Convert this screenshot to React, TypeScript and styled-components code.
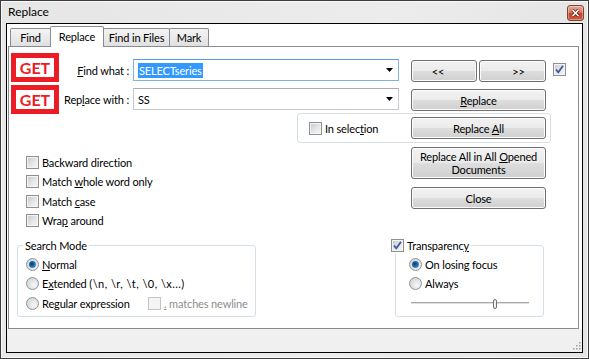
import React from 'react';
import styled, { createGlobalStyle } from 'styled-components';

const GlobalStyle = createGlobalStyle`
  html, body {
    margin: 0;
    padding: 0;
    background: #ffffff;
  }
  body {
    font-family: Lato, "Liberation Sans", sans-serif;
    font-size: 11px;
    letter-spacing: -0.15px;
    color: #000000;
  }
  * {
    box-sizing: border-box;
  }
`;

const Window = styled.div`
  width: 589px;
  height: 359px;
  border: 1px solid #3c3c3c;
  box-shadow: inset 0 0 0 1px #fafafa;
  background: linear-gradient(100deg, #e6e6e6 0%, #ececec 60%, #e4e4e4 100%);
  padding: 0 5px 5px;
  display: flex;
  flex-direction: column;
`;

const TitleBar = styled.div`
  height: 22px;
  margin: 0 -5px;
  padding: 0 4px 0 7px;
  display: flex;
  align-items: flex-start;
  justify-content: space-between;
`;

const TitleText = styled.span`
  line-height: 22px;
  font-size: 12px;
  letter-spacing: 0;
`;

const CloseButton = styled.div`
  width: 17px;
  height: 16px;
  margin-top: 4px;
  border: 1px solid #7a4538;
  border-radius: 3px;
  background: linear-gradient(#e8a796 0%, #d7785f 45%, #c4432a 55%, #d05a3c 100%);
  box-shadow: inset 0 0 0 1px rgba(255, 255, 255, 0.35);
  display: flex;
  align-items: center;
  justify-content: center;
`;

const Client = styled.div`
  height: 330px;
  border: 1px solid #000000;
  background: #ffffff;
  display: flex;
  flex-direction: column;
`;

const TabStrip = styled.div`
  height: 22px;
  padding-left: 3px;
  display: flex;
  align-items: flex-end;
`;

const Tab = styled.div<{ $active?: boolean; $w: number }>`
  width: ${({ $w }) => $w}px;
  height: ${({ $active }) => ($active ? 21 : 18)}px;
  margin-left: -1px;
  margin-bottom: ${({ $active }) => ($active ? -1 : 0)}px;
  padding-bottom: ${({ $active }) => ($active ? 2 : 0)}px;
  border: 1px solid #898c95;
  border-bottom: none;
  border-radius: 2px 2px 0 0;
  background: ${({ $active }) =>
    $active ? '#ffffff' : 'linear-gradient(#f3f3f3 0%, #ebebeb 50%, #dfdfdf 100%)'};
  position: relative;
  z-index: ${({ $active }) => ($active ? 1 : 0)};
  display: flex;
  align-items: center;
  justify-content: center;

  &:first-child {
    margin-left: 0;
  }
`;

const Panel = styled.div`
  width: 571px;
  height: 283px;
  margin-left: 1px;
  border: 1px solid #898c95;
  background: #ffffff;
  padding: 9px 0 0 0;
  display: flex;
  flex-direction: column;
`;

const FieldRow = styled.div`
  height: 29px;
  padding-left: 2px;
  display: flex;
  align-items: flex-start;
`;

const Badge = styled.div<{ $shift: number }>`
  width: 48px;
  height: 29px;
  border: 5px solid #ed1c24;
  background: #ffffff;
  transform: translateY(${({ $shift }) => $shift}px);
  display: flex;
  align-items: center;
  justify-content: center;
  color: #ed1c24;
  font-weight: bold;
  font-size: 16px;
  letter-spacing: 0;
`;

const FieldLabel = styled.div`
  width: 74px;
  height: 29px;
  padding-right: 4px;
  display: flex;
  align-items: center;
  justify-content: flex-end;
  white-space: nowrap;
`;

const Combo = styled.div<{ $focused?: boolean }>`
  width: 266px;
  height: 22px;
  margin-top: 3px;
  border: 1px solid ${({ $focused }) => ($focused ? '#7eb4ea' : '#c5c8ce')};
  border-top-color: ${({ $focused }) => ($focused ? '#569de5' : '#abadb3')};
  background: #ffffff;
  padding-left: 4px;
  display: flex;
  align-items: center;
  justify-content: space-between;
`;

const Selected = styled.span`
  background: #3399ff;
  color: #ffffff;
  padding: 1px 1px;
`;

const ComboArrow = styled.span`
  width: 17px;
  display: flex;
  justify-content: center;
`;

const Button = styled.div<{ $w: number; $h?: number; $shift?: number }>`
  width: ${({ $w }) => $w}px;
  height: ${({ $h }) => $h ?? 22}px;
  border: 1px solid #707070;
  border-radius: 3px;
  background: linear-gradient(#f2f2f2 0%, #ebebeb 48%, #dddddd 52%, #cfcfcf 100%);
  box-shadow: inset 0 0 0 1px #fcfcfc;
  display: flex;
  align-items: center;
  justify-content: center;
  text-align: center;
  line-height: 13px;
  padding: ${({ $shift }) =>
    !$shift ? '0' : $shift < 0 ? `0 ${-$shift * 2}px 0 0` : `0 0 0 ${$shift * 2}px`};
`;

const RowButtons = styled.div`
  margin-top: 4px;
  margin-left: 12px;
  display: flex;
  gap: 2px;
`;

const RowCheck = styled.div`
  margin: 7px 0 0 7px;
`;

const CheckRow = styled.label`
  height: 13px;
  display: flex;
  align-items: center;
  gap: 3px;
  white-space: nowrap;
`;

const Box = styled.span<{ $disabled?: boolean }>`
  width: 13px;
  height: 13px;
  flex: none;
  border: 1px solid ${({ $disabled }) => ($disabled ? '#c4c4c4' : '#8e8f8f')};
  background: ${({ $disabled }) =>
    $disabled ? '#f4f4f4' : 'linear-gradient(135deg, #c4c6ca 0%, #e6e7e9 55%, #f6f6f6 100%)'};
  box-shadow: inset 0 0 0 1px #f4f4f4;
  display: flex;
  align-items: center;
  justify-content: center;
`;

const RadioDot = styled.span<{ $checked?: boolean }>`
  width: 13px;
  height: 13px;
  flex: none;
  border-radius: 50%;
  border: 1px solid #8f9396;
  background: radial-gradient(circle at 65% 65%, #f7f7f7 0%, #d8d9da 70%, #c8c9cb 100%);
  display: flex;
  align-items: center;
  justify-content: center;

  &::after {
    content: '';
    display: ${({ $checked }) => ($checked ? 'block' : 'none')};
    width: 7px;
    height: 7px;
    border-radius: 50%;
    background: radial-gradient(circle at 40% 40%, #0b3f73 0%, #1d6aa8 45%, #76c3ee 100%);
  }
`;

const U = styled.span`
  text-decoration: underline;
  text-underline-offset: 1px;
`;

const Muted = styled.span`
  color: #8d8d8d;
`;

const Escapes = styled.span`
  letter-spacing: 0.45px;
`;

const SelectionGroup = styled.div`
  width: 254px;
  height: 30px;
  margin: -1px 0 0 288px;
  border: 1px solid #d5dfe5;
  border-radius: 3px;
  padding: 0 4px 0 11px;
  display: flex;
  align-items: center;
  justify-content: space-between;
`;

const OptionsBlock = styled.div`
  display: flex;
`;

const CheckList = styled.div`
  width: 402px;
  padding: 13px 0 0 17px;
  display: flex;
  flex-direction: column;
  gap: 6.33px;
`;

const ButtonStack = styled.div`
  padding-top: 4px;
  display: flex;
  flex-direction: column;
  gap: 8px;
`;

const ModesBlock = styled.div`
  margin-top: 12px;
  display: flex;
`;

const GroupBox = styled.fieldset<{ $w: number; $ml: number; $pl: number }>`
  width: ${({ $w }) => $w}px;
  height: 78px;
  margin: 0 0 0 ${({ $ml }) => $ml}px;
  padding: 5px 0 0 ${({ $pl }) => $pl}px;
  border: 1px solid #d5dfe5;
  border-radius: 3px;
  display: flex;
  flex-direction: column;
  gap: 6.5px;
`;

const GroupTitle = styled.legend<{ $ml: number }>`
  margin-left: ${({ $ml }) => $ml}px;
  padding: 0 2px;
  line-height: 14px;
  display: flex;
  align-items: center;
  gap: 3px;
`;

const Slider = styled.div`
  width: 118px;
  height: 12px;
  margin-left: 2px;
  margin-top: 1px;
  position: relative;
  display: flex;
  align-items: center;
`;

const Track = styled.div`
  width: 100%;
  height: 3px;
  border-top: 1px solid #a8a8a8;
  border-bottom: 1px solid #ffffff;
  background: #e0e0e0;
`;

const Thumb = styled.div`
  position: absolute;
  top: 1px;
  width: 4px;
  height: 10px;
  border: 1px solid #707070;
  border-radius: 2px;
  background: #f0f0f0;
`;

const StatusBar = styled.div`
  height: 23px;
  background: #f0f0f0;
  display: flex;
  align-items: flex-end;
  justify-content: flex-end;
  padding: 0 1px 2px 0;
`;

const CheckMark = () => (
  <svg width="11" height="11" viewBox="0 0 11 11">
    <path d="M2 5.5 L4.3 8.3 L9 1.8" fill="none" stroke="#3d5c9e" strokeWidth="1.8" />
  </svg>
);

const CheckBox: React.FC<{ checked?: boolean; disabled?: boolean }> = ({ checked, disabled }) => (
  <Box $disabled={disabled}>{checked && <CheckMark />}</Box>
);

const DropArrow = () => (
  <ComboArrow>
    <svg width="7" height="4" viewBox="0 0 7 4">
      <path d="M0 0 H7 L3.5 4 Z" fill="#000" />
    </svg>
  </ComboArrow>
);

export default function App() {
  return (
    <>
      <GlobalStyle />
      <Window>
        <TitleBar>
          <TitleText>Replace</TitleText>
          <CloseButton>
            <svg width="9" height="8" viewBox="0 0 9 8">
              <path d="M1.5 1 L7.5 7 M7.5 1 L1.5 7" stroke="#4a2118" strokeWidth="3" />
              <path d="M1.5 1 L7.5 7 M7.5 1 L1.5 7" stroke="#ffffff" strokeWidth="1.6" />
            </svg>
          </CloseButton>
        </TitleBar>
        <Client>
          <TabStrip>
            <Tab $w={41}>Find</Tab>
            <Tab $w={54} $active>Replace</Tab>
            <Tab $w={67}>Find in Files</Tab>
            <Tab $w={40}>Mark</Tab>
          </TabStrip>
          <Panel>
            <FieldRow>
              <Badge $shift={-3}>GET</Badge>
              <FieldLabel>
                <span><U>F</U>ind what :</span>
              </FieldLabel>
              <Combo $focused>
                <Selected>SELECTseries</Selected>
                <DropArrow />
              </Combo>
              <RowButtons>
                <Button $w={66} $shift={-6}>&lt;&lt;</Button>
                <Button $w={67} $shift={6}>&gt;&gt;</Button>
              </RowButtons>
              <RowCheck>
                <CheckBox checked />
              </RowCheck>
            </FieldRow>
            <FieldRow>
              <Badge $shift={0}>GET</Badge>
              <FieldLabel>
                <span>Rep<U>l</U>ace with :</span>
              </FieldLabel>
              <Combo>
                <span>SS</span>
                <DropArrow />
              </Combo>
              <RowButtons>
                <Button $w={135}><span><U>R</U>eplace</span></Button>
              </RowButtons>
            </FieldRow>
            <SelectionGroup>
              <CheckRow>
                <CheckBox />
                <span>In selec<U>t</U>ion</span>
              </CheckRow>
              <Button $w={135}><span>Replace <U>A</U>ll</span></Button>
            </SelectionGroup>
            <OptionsBlock>
              <CheckList>
                <CheckRow><CheckBox /><span>Backward direction</span></CheckRow>
                <CheckRow><CheckBox /><span>Match <U>w</U>hole word only</span></CheckRow>
                <CheckRow><CheckBox /><span>Match <U>c</U>ase</span></CheckRow>
                <CheckRow><CheckBox /><span>Wra<U>p</U> around</span></CheckRow>
              </CheckList>
              <ButtonStack>
                <Button $w={135} $h={32}>
                  <span>Replace All in All <U>O</U>pened<br />Documents</span>
                </Button>
                <Button $w={135}>Close</Button>
              </ButtonStack>
            </OptionsBlock>
            <ModesBlock>
              <GroupBox $w={239} $ml={8} $pl={8}>
                <GroupTitle $ml={-3}>Search Mode</GroupTitle>
                <CheckRow><RadioDot $checked /><span><U>N</U>ormal</span></CheckRow>
                <CheckRow>
                  <RadioDot />
                  <span>E<U>x</U>tended <Escapes>(\n, \r, \t, \0, \x...)</Escapes></span>
                </CheckRow>
                <CheckRow>
                  <RadioDot />
                  <span style={{ width: 103 }}>Re<U>g</U>ular expression</span>
                  <CheckBox disabled />
                  <Muted><U>.</U> matches newline</Muted>
                </CheckRow>
              </GroupBox>
              <GroupBox $w={149} $ml={139} $pl={13}>
                <GroupTitle $ml={-20}>
                  <CheckBox checked />
                  <span>Transparenc<U>y</U></span>
                </GroupTitle>
                <CheckRow><RadioDot $checked /><span>On losing focus</span></CheckRow>
                <CheckRow><RadioDot /><span>Always</span></CheckRow>
                <Slider>
                  <Track />
                  <Thumb style={{ left: `${(82 / 118) * 100}%` }} />
                </Slider>
              </GroupBox>
            </ModesBlock>
          </Panel>
          <StatusBar>
            <svg width="10" height="10" viewBox="0 0 10 10">
              {[[8, 2], [5, 5], [8, 5], [2, 8], [5, 8], [8, 8]].map(([x, y]) => (
                <rect key={`${x}-${y}`} x={x} y={y} width="1.5" height="1.5" fill="#a0a0a0" />
              ))}
            </svg>
          </StatusBar>
        </Client>
      </Window>
    </>
  );
}
